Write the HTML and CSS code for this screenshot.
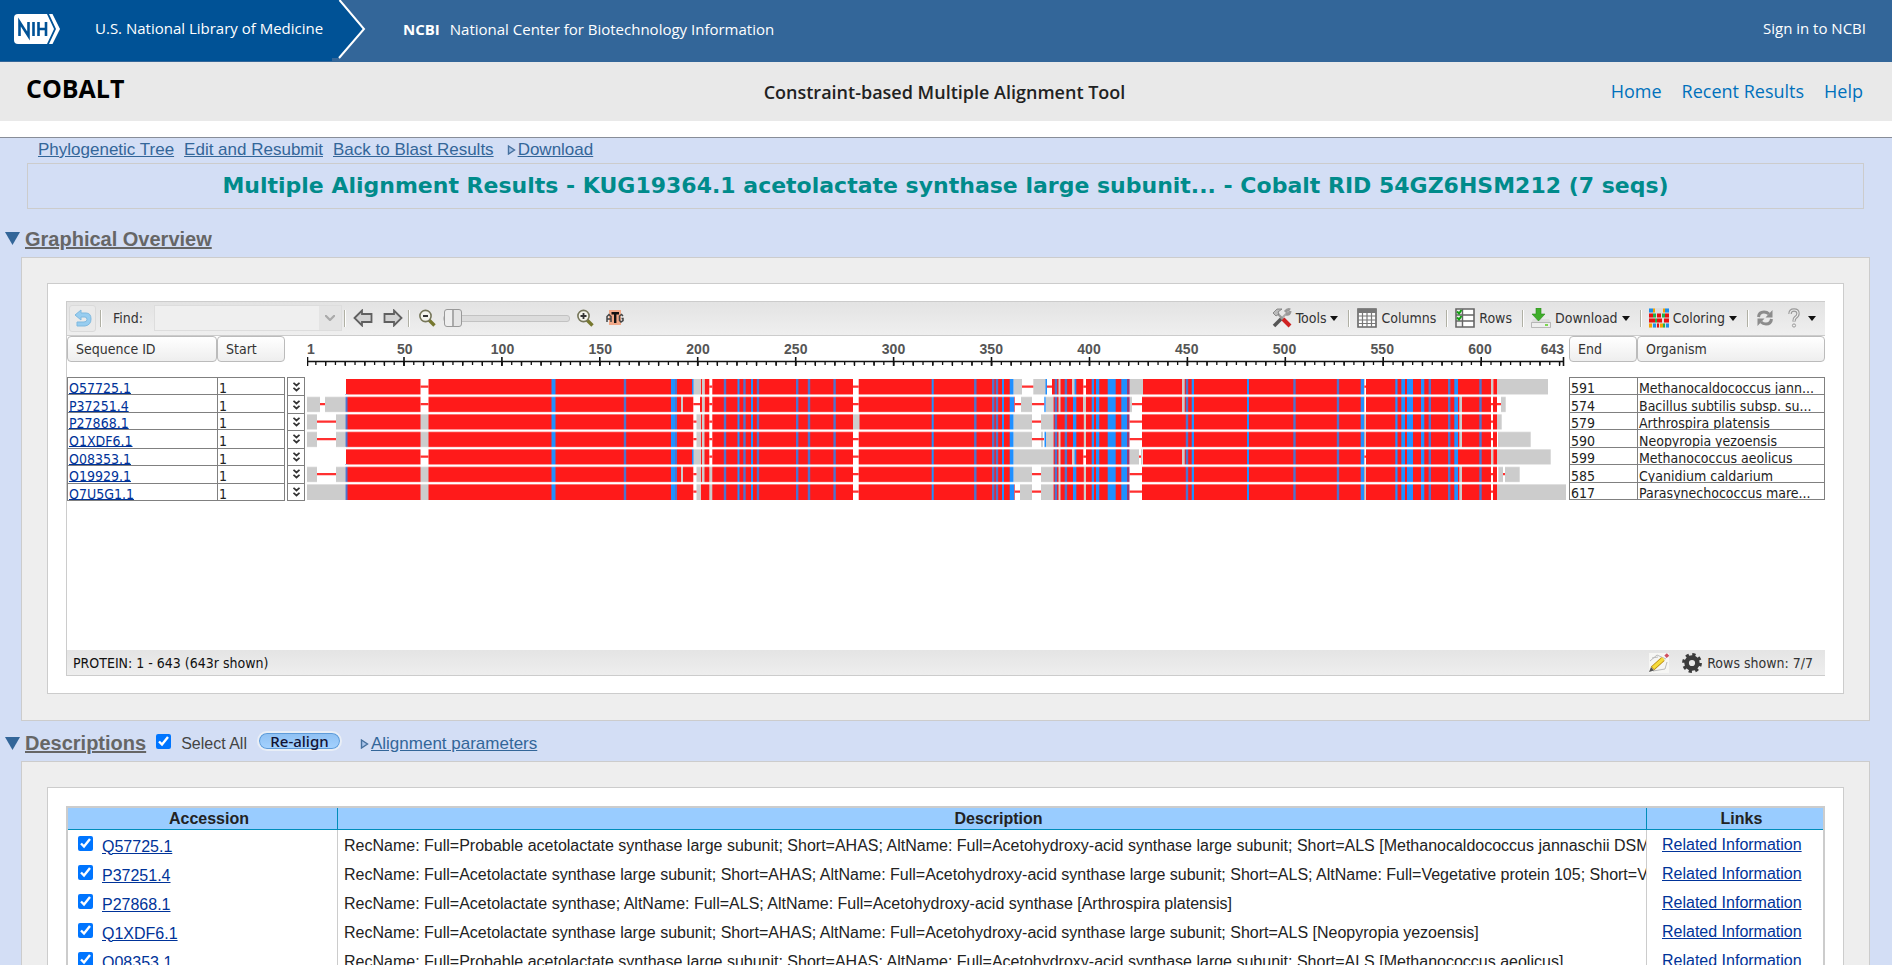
FILE: index.html
```html
<!DOCTYPE html>
<html lang="en">
<head>
<meta charset="utf-8">
<title>COBALT: Multiple Alignment Results</title>
<link rel="stylesheet" href="styles.css">
</head>
<body>
<header class="topbar">
  <div class="nlm">
    <a href="#" class="nih" aria-label="NIH">
      <svg width="46" height="30" viewBox="0 0 46 30"><path fill="#fff" d="M4 0H33L40 15 33 30H4Q0 30 0 26V4Q0 0 4 0Z"/><path fill="#fff" d="M35 0H38.500L46 15 38.500 30H35L42 15Z"/><path fill="none" stroke="#005296" stroke-width="2.600" d="M5.500 22V8L14.500 22V8M19.500 8V22M24.500 8V22M32 8V22M24.500 15H32"/></svg>
    </a>
    <a href="#" class="top-link">U.S. National Library of Medicine</a>
  </div>
  <svg class="chevron" width="34" height="61" viewBox="0 0 34 61"><path fill="#005296" d="M0 0H7.500L32 29 7 58H0Z"/><path fill="none" stroke="#fff" stroke-width="2" d="M7.500 0 32 29 7 58"/></svg>
  <a href="#" class="top-link ncbi"><b>NCBI</b>National Center for Biotechnology Information</a>
  <a href="#" class="top-link signin">Sign in to NCBI</a>
</header>
<div class="appbar">
  <h1>COBALT</h1>
  <p class="tagline">Constraint-based Multiple Alignment Tool</p>
  <nav><a href="#">Home</a><a href="#">Recent Results</a><a href="#">Help</a></nav>
</div>
<main>
  <nav class="actions">
    <a href="#">Phylogenetic Tree</a><a href="#">Edit and Resubmit</a><a href="#">Back to Blast Results</a><span class="toggle"><svg width="9" height="10" viewBox="0 0 8 10"><path fill="#a9c4ea" stroke="#47719e" stroke-width="1.400" d="M1 1 7 5 1 9Z"/></svg><a href="#">Download</a></span>
  </nav>
  <h2 class="title">Multiple Alignment Results - KUG19364.1 acetolactate synthase large subunit... - Cobalt RID 54GZ6HSM212 (7 seqs)</h2>

  <div class="section-head first">
    <svg width="15" height="13" viewBox="0 0 15 13"><path fill="#369" d="M0 0H15L7.500 13Z"/></svg>
    <h3><a href="#">Graphical Overview</a></h3>
  </div>
  <section class="panel">
    <div class="sheet">
      <div class="viewer">
        <div class="toolbar">
          <button class="undo" aria-label="Undo"><svg width="18" height="18" viewBox="0 0 18 18"><path fill="#97cdf0" stroke="#7fb9df" d="M1 6 7 1V4H12Q17 4 17 10 17 16 11 17H3V13H10Q13 13 13 10.500 13 8 11 8H7V11Z"/></svg></button>
          <i class="sep"></i>
          <label class="find" for="find">Find:</label>
          <span class="combo"><input id="find" type="text"><button aria-label="Search history"><svg width="10" height="6" viewBox="0 0 10 6"><path fill="none" stroke="#aaa" stroke-width="2.200" d="M0 0 5 5 10 0"/></svg></button></span>
          <i class="sep s1"></i>
          <button class="b-prev" aria-label="Previous"><svg width="20" height="18" viewBox="0 0 20 18"><path fill="#d2d2d2" stroke="#606060" stroke-width="1.800" d="M1.500 9 9 1.500V5H18.500V13H9V16.500Z"/></svg></button>
          <button class="b-next" aria-label="Next"><svg width="20" height="18" viewBox="0 0 20 18"><path fill="#d2d2d2" stroke="#606060" stroke-width="1.800" d="M18.500 9 11 1.500V5H1.500V13H11V16.500Z"/></svg></button>
          <i class="sep s2"></i>
          <button class="b-out" aria-label="Zoom out"><svg width="18" height="18" viewBox="0 0 18 18"><path stroke="#77782f" stroke-width="3.400" d="M11 11 16.500 16.500"/><circle cx="7.500" cy="7" r="5.600" fill="#f4f4ec" stroke="#76765a" stroke-width="1.600"/><path stroke="#333" stroke-width="2" d="M5 7H10"/></svg></button>
          <input class="slider" type="range" min="0" max="100" value="0" aria-label="Zoom">
          <button class="b-in" aria-label="Zoom in"><svg width="18" height="18" viewBox="0 0 18 18"><path stroke="#77782f" stroke-width="3.400" d="M11 11 16.500 16.500"/><circle cx="7.500" cy="7" r="5.600" fill="#f4f4ec" stroke="#76765a" stroke-width="1.600"/><path stroke="#333" stroke-width="1.800" d="M4.500 7H10.500M7.500 4V10"/></svg></button>
          <button class="b-atg" aria-label="Zoom to sequence"><svg width="18" height="16" viewBox="0 0 18 16"><path fill="#f0a888" d="M3 0H15V15H3Z"/><path fill="none" stroke="#444" stroke-width="1.500" d="M1 12V6.500L3 4.500 5 6.500V12M1 9H5M17 6 15.500 4.500 13.500 6V10.500L15 12 17 10.500V8.500H15.500"/><path fill="none" stroke="#111" stroke-width="2.400" d="M5.500 3.200H13M9.200 3V13"/></svg></button>
          <span class="tools">
            <button><svg width="20" height="20" viewBox="0 0 20 20"><path stroke="#555" stroke-width="3.600" d="M2 18 10 10"/><path stroke="#aaa" stroke-width="2" d="M9 11 16 4"/><path fill="none" stroke="#999" stroke-width="3" d="M13 4Q16 .5 18 2M14 6Q18 7 18 3"/><path stroke="#999" stroke-width="2.200" d="M5 5 12 12"/><path fill="#bbb" stroke="#777" stroke-width=".800" d="M1 5 5 1H10L6 4 7 6 4 8Z"/><path stroke="#cf2222" stroke-width="4" d="M11 11 18 18"/></svg>Tools<i class="caret"></i></button>
            <i class="sep"></i>
            <button><svg width="20" height="20" viewBox="0 0 20 20"><path fill="#fff" stroke="#666" stroke-width="1.600" d="M1 1H19V19H1Z"/><path fill="#777" d="M1 1H19V5H1Z"/><path fill="none" stroke="#777" stroke-width="1.200" d="M1 8H19M1 12H19M1 15.500H19M5.500 1V19M10 1V19M14.500 1V19"/></svg>Columns</button>
            <i class="sep"></i>
            <button><svg width="20" height="20" viewBox="0 0 20 20"><path fill="#fff" stroke="#666" stroke-width="1.600" d="M1 1H19V19H1Z"/><path fill="#eee" d="M2 2H7V18H2Z"/><path fill="none" stroke="#666" stroke-width="1.400" d="M1 7H19M1 13H19M7.500 1V19"/><path fill="none" stroke="#12a012" stroke-width="2" d="M2 3.500 4 5.500 6.500 2M2 9.500 4 11.500 6.500 8"/></svg>Rows</button>
            <i class="sep"></i>
            <button><svg width="20" height="20" viewBox="0 0 20 20"><path fill="#ddd" d="M2 11H18L20 15H0Z"/><path fill="#eee" stroke="#aaa" stroke-width=".800" d="M.5 14.500H19.500V19.500H.5Z"/><path stroke="#5fd028" stroke-width="1.600" d="M14 17H17"/><path fill="#3fae2a" stroke="#2a8a1c" stroke-width=".600" d="M5 0H10V6H14L7.500 13 1 6H5Z"/></svg>Download<i class="caret"></i></button>
            <i class="sep"></i>
            <button><svg width="20" height="20" viewBox="0 0 20 20"><path fill="#ddd" d="M0 0H20V20H0Z"/><path stroke="#1e8fe8" stroke-width="4" d="M0 2.500H4M16 2.500H20M4 17.500H7M17 17.500H20"/><path stroke="#f5a300" stroke-width="4" d="M4 2.500H6M14 2.500H16M0 17.500H3M11 17.500H14"/><path stroke="#e81010" stroke-width="4" d="M0 7.500H4M8 7.500H12M16 7.500H20M0 12.500H6M8 12.500H13M15 12.500H20M8 17.500H10"/><path stroke="#22b04a" stroke-width="4" d="M4 7.500H7M13 7.500H16M6 12.500H8M14 17.500H16"/></svg>Coloring<i class="caret"></i></button>
            <i class="sep"></i>
            <button aria-label="Refresh" class="b-refresh"><svg width="18" height="18" viewBox="0 0 18 18"><path fill="none" stroke="#8c8c8c" stroke-width="3" d="M2.500 8Q3 3 8 3 11 3 13 5M15.500 10Q15 15 10 15 7 15 5 13"/><path fill="#8c8c8c" d="M16.500 1V8.500H9.500ZM1.500 17V9.500H8.500Z"/></svg></button>
            <button aria-label="Help" class="b-help"><svg width="12" height="20" viewBox="0 0 12 20"><path fill="none" stroke="#999" stroke-width="3.400" d="M2 6Q2 2 6 2 10 2 10 5.500 10 8 7.500 9.500 6 10.500 6 13.500"/><path fill="none" stroke="#eee" stroke-width="1.200" d="M2 6Q2 2 6 2 10 2 10 5.500 10 8 7.500 9.500 6 10.500 6 13"/><circle cx="6" cy="17.500" r="1.600" fill="#eee" stroke="#999"/></svg><i class="caret"></i></button>
          </span>
        </div>

        <div class="align">
          <div class="ids">
            <div class="cols"><button class="c-id">Sequence ID</button><button class="c-start">Start</button></div>
            <div class="pair">
              <table class="rows">
                <tr><td class="c-id"><div><a href="#">Q57725.1</a></div></td><td><div>1</div></td></tr>
                <tr><td class="c-id"><div><a href="#">P37251.4</a></div></td><td><div>1</div></td></tr>
                <tr><td class="c-id"><div><a href="#">P27868.1</a></div></td><td><div>1</div></td></tr>
                <tr><td class="c-id"><div><a href="#">Q1XDF6.1</a></div></td><td><div>1</div></td></tr>
                <tr><td class="c-id"><div><a href="#">Q08353.1</a></div></td><td><div>1</div></td></tr>
                <tr><td class="c-id"><div><a href="#">O19929.1</a></div></td><td><div>1</div></td></tr>
                <tr><td class="c-id"><div><a href="#">Q7U5G1.1</a></div></td><td><div>1</div></td></tr>
              </table>
              <svg width="0" height="0" class="defs"><symbol id="more" viewBox="0 0 7 10"><path fill="none" stroke="#333" stroke-width="1.700" d="M.5 .8 3.500 3.500 6.500 .8M.5 5.800 3.500 8.500 6.500 5.800"/></symbol></svg>
              <div class="expanders">
                <button aria-label="Expand row 1"><svg width="7" height="10"><use href="#more"/></svg></button>
                <button aria-label="Expand row 2"><svg width="7" height="10"><use href="#more"/></svg></button>
                <button aria-label="Expand row 3"><svg width="7" height="10"><use href="#more"/></svg></button>
                <button aria-label="Expand row 4"><svg width="7" height="10"><use href="#more"/></svg></button>
                <button aria-label="Expand row 5"><svg width="7" height="10"><use href="#more"/></svg></button>
                <button aria-label="Expand row 6"><svg width="7" height="10"><use href="#more"/></svg></button>
                <button aria-label="Expand row 7"><svg width="7" height="10"><use href="#more"/></svg></button>
              </div>
            </div>
          </div>

          <div class="graph">
            <div class="ruler">
              <div class="labels"><span class="lab-first">1</span><span>50</span><span>100</span><span>150</span><span>200</span><span>250</span><span>300</span><span>350</span><span>400</span><span>450</span><span>500</span><span>550</span><span>600</span><span class="lab-last">643</span></div>
              <svg class="scale" height="12" viewBox="0 0 1259 12" preserveAspectRatio="none">
                <g fill="none" stroke="#111">
                  <path stroke-width="1.600" d="M0 5.500H1257"/>
                  <path stroke-width="3" stroke-dasharray="1.300 8.493" d="M8.200 7.500H1257"/>
                  <path stroke-width="4" stroke-dasharray="1.300 18.286" d="M18 8H1257"/>
                  <path stroke-width="1.600" d="M.5 1V10M97 1V10M194.900 1V10M292.800 1V10M390.700 1V10M488.700 1V10M586.600 1V10M684.500 1V10M782.500 1V10M880.400 1V10M978.300 1V10M1076.200 1V10M1174.200 1V10M1256.500 1V10"/>
                </g>
              </svg>
            </div>
            <svg class="tracks" height="123" viewBox="0 0 1259 123" preserveAspectRatio="none">
              <!-- aligned blocks shared by all sequences -->
              <path fill="#ff1a1a" d="M39 0H1190V123H39Z"/>
              <g fill="none" stroke="#4f74cc" stroke-width="2.400"><path d="M39.300 17V52M39.300 52V70M39.300 87V123M318 0V123M368.800 0V123M418 0V123M437.500 0V123M451 0V123M490.200 0V123M502 0V123M527.600 0V123M668.300 0V123M686.200 0V123M690 0V123M748.900 0V123M758.900 0V123M880 0V123M987.500 0V123M1031 0V123M1122.800 0V123M1142.200 0V123M1173.500 0V123"/></g>
              <g fill="#2090ff"><path d="M244.500 0h4V123h-4ZM364 0h4V123h-4ZM430.500 0h2V123h-2ZM444 0h2V123h-2ZM624.700 0h2V123h-2ZM695 0h2V123h-2ZM702.700 0h4.500V123h-4.500ZM766 0h3.300V123h-3.300ZM784.700 0h2.300V123h-2.300ZM789 0h3.300V123h-3.300ZM800.700 0h8V123h-8ZM814.300 0h6V123h-6ZM884.700 0h2.300V123h-2.300ZM940 0h2V123h-2ZM1053.700 0h3.600V123h-3.600ZM1088.300 0h2.200V123h-2.200ZM1094.300 0h3.700V123h-3.700ZM1100 0h6V123h-6ZM1114 0h3.300V123h-3.300ZM1147.300 0h3.700V123h-3.700Z"/></g>
              <path fill="#8d3a7c" d="M820.300 0h2.400V123h-2.400Z"/>
              <!-- gaps: cleared to white, then filled with unaligned residues or a connector -->
              <g fill="none" stroke="#fff" stroke-width="17.600">
                <path d="M113.500 10H121.500M386.300 10H393.700M395 10H397.500M402.300 10H405.300M546 10H551.700M706.700 10H745M776.300 10H779M822.700 10H836M1057.300 10H1059M1184 10H1186.300"/>
                <path d="M113.500 27.500H121.500M374 27.500H376M386.300 27.500H393M395 27.500H397.500M402.300 27.500H405.300M546 27.500H551.700M707.700 27.500H746.300M822.700 27.500H835M1057.300 27.500H1059M1184 27.500H1186"/>
                <path d="M386.300 45H393.700M402.300 45H405.300M706.700 45H746.300M822.500 45H835M1184 45H1186"/>
                <path d="M386.300 62.500H393.700M402.300 62.500H405.300M546 62.500H551.700M706.700 62.500H746.300M822.500 62.500H835M1184 62.500H1186"/>
                <path d="M113.500 80H121.500M386.300 80H393.700M402.300 80H405.300M546 80H551.700M706.700 80H746.300M776.300 80H779M822.700 80H836M1057.300 80H1059M1184 80H1186.300"/>
                <path d="M386.300 97.500H393.700M546 97.500H551.700M706.700 97.500H746.300M822.500 97.500H835M1184 97.500H1186"/>
                <path d="M386.300 115H393.700M546 115H551.700M707.700 115H746.300M822.500 115H835M1184 115H1186"/>
              </g>
              <g fill="none" stroke="#ccc" stroke-width="17">
                <path d="M386.300 10H393.700M395 10H397.500M706.700 10H715M726.300 10H739M751.500 10H753.500M765 10H767.500M823 10H836M875 10H877.700M1184 10H1186M1190 10H1241"/>
                <path d="M0 27.500H13M18 27.500H38.500M374 27.500H376M395 27.500H397.500M714 27.500H725M739 27.500H746.300M751.500 27.500H753.500M776 27.500H779M823 27.500H825M875 27.500H877.700M1152.300 27.500H1155M1194 27.500H1198.700"/>
                <path d="M0 45H10M29 45H38.500M113.500 45H121.500M389.500 45H393.700M395 45H397.500M546 45H552.500M706.700 45H725M734 45H746.300M776.800 45H779M1057.300 45H1059M1152.300 45H1155M1190 45H1194.700"/>
                <path d="M0 62.500H10M29 62.500H38.500M113.500 62.500H121.500M389.500 62.500H393.700M395 62.500H397.500M706.700 62.500H725M734 62.500H736M739 62.500H746.300M751.500 62.500H753.500M776.800 62.500H779M1057.300 62.500H1059M1152.300 62.500H1155M1191 62.500H1223.700"/>
                <path d="M386.300 80H393.700M395 80H397.500M706.700 80H746.300M751.500 80H753.500M765 80H767.500M822.700 80H832M834 80H835.500M875 80H877.700M1184 80H1186M1190 80H1243.700"/>
                <path d="M0 97.500H10M29 97.500H38.500M113.500 97.500H121.500M374 97.500H376M389.500 97.500H393.700M395 97.500H397.500M402.300 97.500H405.300M706.700 97.500H725M734 97.500H746.300M751.500 97.500H753.500M776.800 97.500H779M1057.300 97.500H1059M1152.300 97.500H1155M1191.300 97.500H1196M1198 97.500H1212.700"/>
                <path d="M0 115H38.500M113.500 115H121.500M389.500 115H393.700M402.300 115H405.300M713 115H725M734 115H746.300M751.500 115H753.500M776.800 115H779M1057.300 115H1059M1152.300 115H1155M1190 115H1259"/>
              </g>
              <g fill="none" stroke="#2090ff" stroke-width="17"><path d="M385 10H386.500M738.500 10H740M737.300 27.500H738.700M737.500 62.500H739M385 80H386.500"/></g>
              <g fill="none" stroke="#ff3030" stroke-width="2.200">
                <path d="M113.500 9.700H121.500M402.300 9.700H405.300M546 9.700H551.700M715 9.700H726.300M740 9.700H745M776.300 9.700H779M1057.300 9.700H1059"/>
                <path d="M13 27.200H18M113.500 27.200H121.500M386.300 27.200H393M402.300 27.200H405.300M546 27.200H551.700M707.700 27.200H714M725 27.200H737.300M825 27.200H835M1184 27.200H1186M1190 27.200H1194"/>
                <path d="M10 44.700H29M386.300 44.700H389.500M402.300 44.700H405.300M725 44.700H734M822.500 44.700H835M1184 44.700H1186"/>
                <path d="M10 62.200H29M386.300 62.200H389.500M402.300 62.200H405.300M546 62.200H551.700M725 62.200H737M822.500 62.200H835M1184 62.200H1186"/>
                <path d="M113.500 79.700H121.500M402.300 79.700H405.300M546 79.700H551.700M776.300 79.700H779M832 79.700H834M1057.300 79.700H1059"/>
                <path d="M10 97.200H29M386.300 97.200H389.500M546 97.200H551.700M725 97.200H734M822.500 97.200H835M1184 97.200H1186M1196 97.200H1198"/>
                <path d="M386.300 114.700H389.500M546 114.700H551.700M707.700 114.700H713M725 114.700H734M822.500 114.700H835M1184 114.700H1186"/>
              </g>
              <path fill="#fff" d="M0 0H1259V2H0Z"/>
              <path fill="none" stroke="#fff" stroke-opacity=".5" stroke-width="3" d="M0 18.700H1259M0 36.200H1259M0 53.700H1259M0 71.200H1259M0 88.700H1259M0 106.200H1259"/>
              <path fill="none" stroke="#fff" stroke-width="1.800" d="M0 18.700H1259M0 36.200H1259M0 53.700H1259M0 71.200H1259M0 88.700H1259M0 106.200H1259"/>
            </svg>
          </div>

          <div class="organisms">
            <div class="cols"><button class="c-end">End</button><button class="c-org">Organism</button></div>
            <table class="rows">
              <tr><td class="c-end"><div>591</div></td><td><div>Methanocaldococcus jann...</div></td></tr>
              <tr><td class="c-end"><div>574</div></td><td><div>Bacillus subtilis subsp. su...</div></td></tr>
              <tr><td class="c-end"><div>579</div></td><td><div>Arthrospira platensis</div></td></tr>
              <tr><td class="c-end"><div>590</div></td><td><div>Neopyropia yezoensis</div></td></tr>
              <tr><td class="c-end"><div>599</div></td><td><div>Methanococcus aeolicus</div></td></tr>
              <tr><td class="c-end"><div>585</div></td><td><div>Cyanidium caldarium</div></td></tr>
              <tr><td class="c-end"><div>617</div></td><td><div>Parasynechococcus mare...</div></td></tr>
            </table>
          </div>
        </div>

        <div class="status">
          <span>PROTEIN: 1 - 643 (643r shown)</span>
          <span class="status-right">
            <svg width="20" height="20" viewBox="0 0 20 20"><path fill="#f6f6f4" d="M0 0H20V20H0Z"/><path fill="none" stroke="#bbb" d="M1 8 8 2 17 6M4 18 16 16 18 9M3 5 9 4"/><path stroke="#b8860b" stroke-width="5" d="M3.500 15.500 14 6"/><path stroke="#f5dc3c" stroke-width="3.400" d="M4 15 14.500 5.500"/><path stroke="#d05060" stroke-width="3.400" d="M16.500 3.800 19 1.500"/><path fill="#555" d="M0 19 2 14 5 17.500Z"/></svg>
            <svg class="gear" width="20" height="20" viewBox="0 0 20 20"><circle cx="10" cy="10" r="5.400" fill="none" stroke="#3c3c3c" stroke-width="4.600"/><circle cx="10" cy="10" r="8.300" fill="none" stroke="#3c3c3c" stroke-width="3.200" stroke-dasharray="3.200 3.319"/></svg>
            Rows shown: 7/7
          </span>
        </div>
      </div>
    </div>
  </section>

  <div class="section-head">
    <svg width="15" height="13" viewBox="0 0 15 13"><path fill="#369" d="M0 0H15L7.500 13Z"/></svg>
    <h3><a href="#">Descriptions</a></h3>
    <input type="checkbox" id="all" checked><label for="all">Select All</label>
    <button class="realign">Re-align</button>
    <span class="toggle"><svg width="9" height="10" viewBox="0 0 8 10"><path fill="#a9c4ea" stroke="#47719e" stroke-width="1.400" d="M1 1 7 5 1 9Z"/></svg><a href="#">Alignment parameters</a></span>
  </div>
  <section class="panel">
    <div class="sheet">
      <table class="desc">
        <thead><tr><th class="d-acc">Accession</th><th>Description</th><th class="d-link">Links</th></tr></thead>
        <tbody>
          <tr><td><input type="checkbox" checked aria-label="Q57725.1"><a href="#">Q57725.1</a></td><td>RecName: Full=Probable acetolactate synthase large subunit; Short=AHAS; AltName: Full=Acetohydroxy-acid synthase large subunit; Short=ALS [Methanocaldococcus jannaschii DSM 2661]</td><td><a href="#">Related Information</a></td></tr>
          <tr><td><input type="checkbox" checked aria-label="P37251.4"><a href="#">P37251.4</a></td><td>RecName: Full=Acetolactate synthase large subunit; Short=AHAS; AltName: Full=Acetohydroxy-acid synthase large subunit; Short=ALS; AltName: Full=Vegetative protein 105; Short=VEG105</td><td><a href="#">Related Information</a></td></tr>
          <tr><td><input type="checkbox" checked aria-label="P27868.1"><a href="#">P27868.1</a></td><td>RecName: Full=Acetolactate synthase; AltName: Full=ALS; AltName: Full=Acetohydroxy-acid synthase [Arthrospira platensis]</td><td><a href="#">Related Information</a></td></tr>
          <tr><td><input type="checkbox" checked aria-label="Q1XDF6.1"><a href="#">Q1XDF6.1</a></td><td>RecName: Full=Acetolactate synthase large subunit; Short=AHAS; AltName: Full=Acetohydroxy-acid synthase large subunit; Short=ALS [Neopyropia yezoensis]</td><td><a href="#">Related Information</a></td></tr>
          <tr><td><input type="checkbox" checked aria-label="Q08353.1"><a href="#">Q08353.1</a></td><td>RecName: Full=Probable acetolactate synthase large subunit; Short=AHAS; AltName: Full=Acetohydroxy-acid synthase large subunit; Short=ALS [Methanococcus aeolicus]</td><td><a href="#">Related Information</a></td></tr>
        </tbody>
      </table>
    </div>
  </section>
</main>
</body>
</html>
```
FILE: styles.css
```css
* { box-sizing: border-box; }
html, body { height: 100%; }
body {
  margin: 0;
  display: flex;
  flex-direction: column;
  font: 16px/20px "Liberation Sans", Arial, sans-serif;
  color: #222;
  background: #fff;
}
h1, h2, h3, p { margin: 0; }
button { font: inherit; color: inherit; border: 0; background: none; padding: 0; }
svg { display: block; flex: none; }

/* NCBI header */
.topbar {
  display: flex;
  flex: none;
  height: 62px;
  background: #336699;
  font: 15px/20px "Open Sans", "Noto Sans", sans-serif;
}
.nlm { display: flex; align-items: center; gap: 35px; width: 332px; height: 61px; padding: 0 0 4px 14px; background: #005296; }
.nlm .top-link { padding-bottom: 2px; }
.top-link { color: #fff; text-decoration: none; white-space: nowrap; }
.ncbi { align-self: center; margin-left: 37px; padding-bottom: 4px; }
.ncbi b { margin-right: 10px; }
.signin { align-self: center; margin-left: auto; margin-right: 26px; padding-bottom: 6px; }

.appbar {
  display: grid;
  grid-template-columns: 1fr auto 1fr;
  align-items: center;
  flex: none;
  height: 59px;
  padding: 0 29px 0 26px;
  background: #e9e9e9;
  font-family: "Open Sans", "Noto Sans", sans-serif;
}
.appbar h1 { font-size: 25px; line-height: 30px; color: #000; padding-bottom: 7px; }
.tagline { font-size: 18px; font-weight: 600; line-height: 22px; }
.appbar nav { display: flex; justify-content: flex-end; gap: 20px; padding-bottom: 2px; font-size: 18px; }
.appbar nav a { color: #0071bc; text-decoration: none; }

/* Scrolling results area */
main {
  flex: 1;
  min-height: 0;
  overflow-y: auto;
  scrollbar-width: none;
  margin-top: 16px;
  border-top: 1px solid #888d98;
  background: #d3def5;
}
main a { color: #336699; }
.actions { display: flex; gap: 10px; height: 25px; padding: 2px 38px 0; font-size: 17px; }
.toggle { display: flex; align-items: center; gap: 2px; font-size: 17px; }
.actions .toggle { margin-left: 3px; height: 20px; }
.title {
  margin: 0 28px 0 27px;
  border: 1px solid #ccc;
  height: 46px;
  font: bold 22px/44px Verdana, "DejaVu Sans", sans-serif;
  color: #008b8b;
  text-align: center;
  white-space: nowrap;
}
.section-head { display: flex; align-items: center; height: 40px; padding: 4px 0 0 5px; color: #444; }
.section-head.first { height: 48px; padding-top: 11px; }
.section-head h3 { margin-left: 5px; font-size: 20px; line-height: 24px; }
.section-head h3 a { color: #666; }
.section-head label, .section-head .toggle { padding-top: 2px; }
.section-head input { width: 15px; height: 15px; margin: 0 10px 4px 10px; }
.realign {
  width: 85px;
  height: 20px;
  margin: 0 18px 4px 10px;
  border: 2px solid #e9eef6;
  border-radius: 10px;
  background: linear-gradient(#8fc0f2, #a4d2ff);
  box-shadow: inset 0 0 0 1px #5e9bd8;
  font: 500 15px/15px "Noto Sans", sans-serif;
  color: #113;
}
.panel { margin: 0 22px 0 21px; padding: 25px 25px 26px; border: 1px solid #ccc; background: #eee; }
.sheet { padding: 17px 18px; border: 1px solid #ccc; background: #fff; }

/* Alignment viewer */
.viewer {
  border-left: 1px solid #ccc;
  font: 14px/18px Tahoma, "DejaVu Sans Condensed", "Noto Sans", sans-serif;
  color: #333;
}
.toolbar {
  display: flex;
  align-items: center;
  height: 35px;
  padding: 0 0 1px 2px;
  border-top: 1px solid #ccc;
  border-bottom: 1px solid #ccc;
  background: linear-gradient(#e3e3e3, #efefef);
}
.sep { width: 2px; height: 17px; background: #b0b0a4; border-right: 1px solid #fff; }
.undo { display: grid; place-items: center; width: 27px; height: 27px; margin-right: 4px; border: 1px solid #dadada; border-radius: 3px; background: #eaeaea; }
.find { width: 52px; padding-left: 11px; }
.combo { display: flex; width: 188px; height: 26px; border: 1px solid #ddd; background: #efefef; }
.combo input { flex: 1; min-width: 0; border: 0; background: none; font: inherit; padding: 0 4px; }
.combo button { display: grid; place-items: center; width: 22px; background: #e4e4e4; }
.s1 { margin: 0 7px 0 2px; }
.b-prev { margin-right: 10px; }
.s2 { margin: 0 8px 0 5px; }
.slider { appearance: none; width: 127px; height: 18px; margin: 0 6px 0 7px; background: none; }
.slider::-webkit-slider-runnable-track { height: 7px; border: 1px solid #c2c2c2; border-radius: 3px; background: #dcdcdc; }
.slider::-webkit-slider-thumb {
  appearance: none;
  width: 18px;
  height: 18px;
  margin-top: -7px;
  border: 1px solid #999;
  border-radius: 3px;
  background: linear-gradient(90deg, #eee 7px, #aaa 7px, #aaa 9px, #e4e4e4 9px);
}
.b-atg { margin-left: 12px; }
.tools { display: flex; align-items: center; margin-left: auto; }
.tools button { display: flex; align-items: center; gap: 4px; margin: 0 10px 0 7px; white-space: nowrap; }
.caret { width: 0; border: 4px solid transparent; border-top: 5px solid #111; border-bottom: 0; }
.tools .b-refresh { margin-right: 7px; }
.tools .b-help { gap: 8px; margin-right: 9px; }

.align { display: flex; height: 314px; }
.ids { width: 240px; flex: none; }
.organisms { width: 256px; flex: none; margin-left: 3px; }
.graph { flex: 1; min-width: 0; }
.cols { display: flex; height: 41px; padding-bottom: 15px; }
.cols button {
  padding-left: 8px;
  border: 1px solid #bbb;
  border-radius: 4px;
  background: linear-gradient(#fff, #eee);
  text-align: left;
}
.c-id { width: 150px; }
.c-start, .c-end { width: 68px; }
.c-org { flex: 1; }
.pair { display: flex; gap: 2px; }
.defs { position: absolute; }
.rows { width: 218px; table-layout: fixed; border-collapse: collapse; color: #222; }
.organisms .rows { width: 100%; }
.rows td { height: 17px; padding: 0; border: 1px solid #808080; }
.rows tr:nth-child(even) td { height: 18px; }
.rows div { height: 16px; padding: 1px 0 0 1px; overflow: hidden; white-space: nowrap; line-height: 18px; }
.rows a { color: #003399; text-decoration: underline 1px; text-underline-offset: 0; text-decoration-skip-ink: none; }
.expanders { display: grid; grid-template-rows: repeat(7, 1fr); width: 18px; height: 124px; border: 1px solid #808080; }
.expanders button { display: grid; place-items: center; border-top: 1px solid #808080; }
.expanders button:first-child { border-top: 0; }
.ruler { height: 41px; padding-top: 5px; }
.labels { display: flex; height: 15px; font: bold 14px/16px "Liberation Sans", Arial, sans-serif; color: #555; }
.labels span { flex: 50 1 0; text-align: center; }
.labels .lab-first { flex-grow: 25; text-align: left; }
.labels .lab-last { flex-grow: 18; text-align: right; padding-right: 2px; }
.scale, .tracks { width: 100%; }

.status {
  display: flex;
  justify-content: space-between;
  align-items: center;
  height: 26px;
  padding: 0 12px 0 6px;
  border-bottom: 1px solid #ccc;
  background: linear-gradient(#e4e4e4, #eee);
  color: #111;
}
.status-right { display: flex; align-items: center; gap: 5px; color: #333; }
.gear { margin-left: 8px; }

/* Descriptions table */
.desc { width: 100%; margin-top: 1px; table-layout: fixed; border-collapse: separate; border-spacing: 0; border: 2px solid #ccc; }
.desc th { height: 22px; padding: 0 0 0 13px; border-bottom: 1px solid #008db9; border-right: 1px solid #008db9; background: #99ccff; line-height: 19px; }
.desc th:last-child { border-right: 0; }
.d-acc { width: 270px; }
.d-link { width: 176px; }
.desc td { height: 29px; padding: 3px 0 0 6px; border-right: 1px solid #ccc; overflow: hidden; white-space: nowrap; line-height: 20px; }
.desc td:first-child { padding-left: 10px; }
.desc td:last-child { padding: 1px 0 0 15px; border-right: 0; }
.desc a { color: #003399; }
.desc input { width: 15px; height: 15px; margin: 0 9px 0 0; vertical-align: 1px; }
```
